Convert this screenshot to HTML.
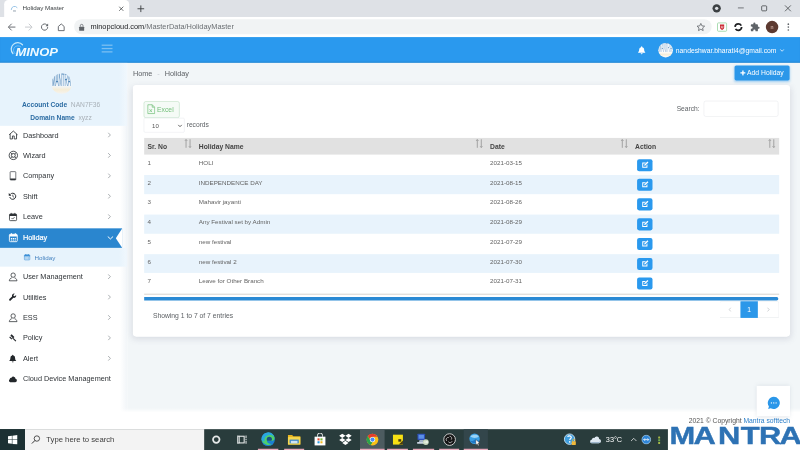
<!DOCTYPE html>
<html lang="en">
<head>
<meta charset="utf-8">
<title>Holiday Master</title>
<style>
*{box-sizing:border-box;margin:0;padding:0}
html,body{width:800px;height:450px;overflow:hidden;background:#fff}
body{font-family:"Liberation Sans",sans-serif;color:#333}
#S{position:absolute;left:0;top:0;width:1920px;height:1080px;transform:scale(0.4166667);transform-origin:0 0;overflow:hidden;background:#fff;filter:blur(.7px)}
.a{position:absolute}
/* chrome */
#tabs{left:0;top:0;width:1920px;height:41px;background:#dee1e6}
#tab{left:10px;top:0px;width:300px;height:41px;background:#fff;border-radius:10px 10px 0 0}
#tab span{position:absolute;left:44px;top:11px;font-size:15px;color:#3c4043}
#addr{left:0;top:41px;width:1920px;height:48px;background:#fff}
#pill{left:178px;top:46px;width:1530px;height:36px;border-radius:18px;background:#f1f3f4}
#url{left:217px;top:54px;font-size:17.75px;color:#202124;white-space:nowrap}
#url i{font-style:normal;color:#6b6f73}
/* app header */
#hdr{left:0;top:89px;width:1920px;height:62px;background:#2a99ee;box-shadow:inset 0 -5px 4px -2px rgba(20,70,120,.22)}
/* sidebar */
#side{left:0;top:151px;width:306px;height:879px;background:linear-gradient(90deg,#fff 0,#fff 288px,#f1f5f8 306px)}
#prof{left:0;top:151px;width:306px;height:151px;background:linear-gradient(90deg,#e7f3fc 0,#e7f3fc 285px,#f1f8fd 306px)}
.mi{position:absolute;left:0;width:293px;height:49px;font-size:17.5px;color:#2f3337;white-space:nowrap}
.mi b{position:absolute;left:55px;top:14px;font-weight:normal}
.mi .ch{position:absolute;left:258px;top:17px;width:9px;height:14px}
.mi svg.ic{position:absolute;left:19px;top:11px;width:26px;height:26px}
#act{background:#2a86cf;color:#fff}
#act b{top:12px}
#act svg.ic{top:9px}
#act b{font-weight:normal;-webkit-text-stroke:.45px #fff}
#sub{left:0;top:595px;width:306px;height:45px;background:linear-gradient(90deg,#e7f3fc 0,#e7f3fc 285px,#f1f8fd 306px);font-size:15px;color:#4583c0}
/* content */
#main{left:306px;top:151px;width:1614px;height:838px;background:#f2f6f8}
#card{left:319px;top:204px;width:1577px;height:604px;background:#fff;border-radius:8px;box-shadow:0 5px 16px rgba(110,112,140,.2)}
#foot{left:0;top:989px;width:1920px;height:41px;background:#fff}
table{border-collapse:collapse}
#tbl{left:346px;top:331px;width:1524px;font-size:15px;color:#636363}
#tbl th{height:40px;white-space:nowrap;text-align:left;font-weight:bold;color:#444;font-size:16.25px;padding-left:8px;padding-top:3px;position:relative}
#tbl td{height:47.4px;padding-left:8px;padding-bottom:9px}
.eb{display:inline-block;width:37px;height:29px;margin-left:5px;border-radius:5px;background:#2a99ee;vertical-align:middle;position:relative;top:6px}
/* taskbar */
#tb{left:0;top:1030px;width:1920px;height:50px;background:#293c3c}
.so{position:absolute;right:9px;top:2px;width:18px;height:23px}
</style>
</head>
<body>
<div id="S">
<!-- browser chrome -->
<div id="tabs" class="a"></div>
<div id="tab" class="a"><span>Holiday Master</span>
<svg class="a" style="left:14px;top:11px;width:22px;height:20px" viewBox="0 0 22 20"><path d="M3 12a8 8 0 0 1 14-5" fill="none" stroke="#8fbfe6" stroke-width="2.2" stroke-linecap="round"/><text x="7" y="17" font-size="8" font-weight="bold" fill="#9aa7b3" font-family="Liberation Sans, sans-serif">m</text></svg>
<svg class="a" style="left:274px;top:14px;width:14px;height:14px" viewBox="0 0 14 14"><path d="M2 2l10 10M12 2L2 12" stroke="#3c4043" stroke-width="1.8" fill="none"/></svg>
</div>
<svg class="a" style="left:328px;top:11px;width:20px;height:20px" viewBox="0 0 20 20"><path d="M10 2v16M2 10h16" stroke="#3c4043" stroke-width="2.2" fill="none"/></svg>
<!-- window controls -->
<svg class="a" style="left:1708px;top:8px;width:24px;height:24px" viewBox="0 0 24 24"><circle cx="12" cy="12" r="10" fill="#3c4043"/><circle cx="12" cy="12" r="4" fill="#dee1e6"/></svg>
<svg class="a" style="left:1766px;top:8px;width:24px;height:24px" viewBox="0 0 24 24"><path d="M5 11h14" stroke="#3c4043" stroke-width="1.6"/></svg>
<svg class="a" style="left:1822px;top:8px;width:24px;height:24px" viewBox="0 0 24 24"><rect x="6" y="6" width="12" height="12" rx="2" fill="none" stroke="#3c4043" stroke-width="1.8"/></svg>
<svg class="a" style="left:1879px;top:8px;width:24px;height:24px" viewBox="0 0 24 24"><path d="M5 5l14 14M19 5L5 19" stroke="#3c4043" stroke-width="1.8" fill="none"/></svg>
<div id="addr" class="a"></div>
<div id="pill" class="a"></div>
<!-- nav icons -->
<svg class="a" style="left:16px;top:53px;width:24px;height:24px" viewBox="0 0 24 24"><path d="M21 12H5M12 4l-8 8 8 8" stroke="#5f6368" stroke-width="2.2" fill="none"/></svg>
<svg class="a" style="left:57px;top:53px;width:24px;height:24px" viewBox="0 0 24 24"><path d="M3 12h16M12 4l8 8-8 8" stroke="#c4c7ca" stroke-width="2.2" fill="none"/></svg>
<svg class="a" style="left:95px;top:53px;width:24px;height:24px" viewBox="0 0 24 24"><path d="M19.5 12a7.5 7.5 0 1 1-2.2-5.3" stroke="#5f6368" stroke-width="2.3" fill="none"/><path d="M20.5 3.5v6.3h-6.3z" fill="#5f6368"/></svg>
<svg class="a" style="left:135px;top:53px;width:24px;height:24px" viewBox="0 0 24 24"><path d="M5 20.5V10.5l7-6 7 6v10z" stroke="#5f6368" stroke-width="2.2" fill="none" stroke-linejoin="round"/></svg>
<svg class="a" style="left:188px;top:56px;width:16px;height:20px" viewBox="0 0 16 20"><rect x="2" y="8" width="12" height="10" rx="1.5" fill="#5f6368"/><path d="M4.8 8V5.6a3.2 3.2 0 0 1 6.4 0V8" stroke="#5f6368" stroke-width="1.8" fill="none"/></svg>
<div id="url" class="a">minopcloud.com<i>/MasterData/HolidayMaster</i></div>
<!-- toolbar right -->
<svg class="a" style="left:1670px;top:53px;width:24px;height:24px" viewBox="0 0 24 24"><path d="M12 3.2l2.7 5.9 6.4.7-4.8 4.3 1.3 6.3-5.6-3.2-5.6 3.2 1.3-6.3-4.8-4.300 6.4-.7z" stroke="#5f6368" stroke-width="1.9" fill="none" stroke-linejoin="round"/></svg>
<svg class="a" style="left:1720px;top:52px;width:26px;height:26px" viewBox="0 0 26 26"><rect x="2" y="3" width="22" height="20" rx="2" fill="#fff" stroke="#9ad6a4" stroke-width="2"/><path d="M8 7h10v7c0 3-2.500 5-5 6-2.500-1-5-3-5-6z" fill="#c9252c"/><path d="M11 10v3.500a2 2 0 0 0 4 0V10" stroke="#fff" stroke-width="1.600" fill="none"/></svg>
<svg class="a" style="left:1759px;top:52px;width:26px;height:26px" viewBox="0 0 26 26"><circle cx="13" cy="13" r="8" fill="none" stroke="#202124" stroke-width="4.200" stroke-dasharray="20 5.130"/></svg>
<svg class="a" style="left:1800px;top:53px;width:24px;height:24px" viewBox="0 0 24 24"><path d="M20.500 11H19V7a2 2 0 0 0-2-2h-4V3.500a2.500 2.500 0 0 0-5 0V5H4a2 2 0 0 0-2 2v3.800h1.500a2.700 2.700 0 0 1 0 5.400H2V20a2 2 0 0 0 2 2h3.800v-1.500a2.700 2.700 0 0 1 5.400 0V22H17a2 2 0 0 0 2-2v-4h1.500a2.500 2.500 0 0 0 0-5z" fill="#5f6368"/></svg>
<div class="a" style="left:1838px;top:50px;width:30px;height:30px;border-radius:50%;background:#5d3a31;color:#e8c9bd;font-size:13px;text-align:center;line-height:30px">n</div>
<svg class="a" style="left:1880px;top:53px;width:24px;height:24px" viewBox="0 0 24 24"><circle cx="12" cy="5" r="2" fill="#5f6368"/><circle cx="12" cy="12" r="2" fill="#5f6368"/><circle cx="12" cy="19" r="2" fill="#5f6368"/></svg>

<!-- app header -->
<div id="hdr" class="a"></div>
<svg class="a" style="left:20px;top:96px;width:130px;height:46px" viewBox="0 0 130 46"><g transform="translate(3,2.500)"><path d="M8 30A15 15 0 0 1 31 9" fill="none" stroke="#c4e8fb" stroke-width="3" stroke-linecap="round"/><path d="M13 30A10 10 0 0 1 27 14" fill="none" stroke="#9fd2f6" stroke-width="1.500" stroke-linecap="round"/></g><text x="17" y="38" font-family="Liberation Sans, sans-serif" font-weight="bold" font-style="italic" font-size="24.500" fill="#f1fbff" textLength="102" lengthAdjust="spacingAndGlyphs">MINOP</text></svg>
<div class="a" style="left:244px;top:107px;width:26px;height:3px;background:#7cc0f2"></div>
<div class="a" style="left:244px;top:115px;width:26px;height:3px;background:#7cc0f2"></div>
<div class="a" style="left:244px;top:123px;width:26px;height:3px;background:#7cc0f2"></div>
<svg class="a" style="left:1529px;top:108px;width:22px;height:24px" viewBox="0 0 22 22"><path d="M11 2a1.500 1.500 0 0 1 1.500 1.500v.6A6 6 0 0 1 17 10c0 4 1.200 5.200 2.500 6.500v1.200h-17v-1.200C3.800 15.200 5 14 5 10a6 6 0 0 1 4.500-5.900v-.6A1.500 1.500 0 0 1 11 2zM8.700 18.800h4.600a2.300 2.300 0 0 1-4.600 0z" fill="#fff"/></svg>
<div class="a" style="left:1580px;top:103px;width:35px;height:35px;border-radius:50%;background:linear-gradient(#f4f9fd 0%,#fff 60%,#f6eeda 80%,#fff 100%);overflow:hidden"><svg width="35" height="35" viewBox="0 0 50 50"><g transform="translate(0,31) scale(1,4.200)"><text x="1" y="0" font-family="Liberation Sans, sans-serif" font-size="10" fill="#7fa6cc" textLength="46" lengthAdjust="spacingAndGlyphs">MANTRA</text></g></svg></div>
<div class="a" style="left:1622px;top:111px;font-size:16.250px;color:#fff;white-space:nowrap">nandeshwar.bharati4@gmail.com</div>
<svg class="a" style="left:1871px;top:117px;width:12px;height:8px" viewBox="0 0 12 8"><path d="M1.500 1.500l4.500 4.500 4.500-4.500" stroke="#fff" stroke-width="1.800" fill="none"/></svg>

<!-- sidebar -->
<div id="side" class="a"></div>
<div id="prof" class="a"></div>
<div class="a" style="left:123px;top:176px;width:50px;height:50px;border-radius:50%;overflow:hidden;background:linear-gradient(#eaf4fc 0%,#f1f7fc 58%,#f5edd8 78%,#f6f0e4 90%,#eef4f8 100%)"><svg width="50" height="50" viewBox="0 0 50 50"><g transform="translate(0,31) scale(1,4.200)"><text x="1" y="0" font-family="Liberation Sans, sans-serif" font-size="10" fill="#4f86b8" textLength="46" lengthAdjust="spacingAndGlyphs">MANTRA</text></g></svg></div>
<div class="a" style="left:0;top:242px;width:293px;text-align:center;font-size:16px;white-space:nowrap;color:#a9b1b8"><span style="font-weight:bold;color:#2c6ca3">Account Code</span>&nbsp; NAN7F36</div>
<div class="a" style="left:0;top:273px;width:293px;text-align:center;font-size:16px;white-space:nowrap;color:#a9b1b8"><span style="font-weight:bold;color:#2c6ca3">Domain Name</span>&nbsp; xyzz</div>
<div class="mi" style="top:300px"><svg class="ic" viewBox="0 0 22 22"><path d="M2.500 10.500L11 3l8.500 7.500M4.500 9v10h4.700v-6h3.600v6h4.700V9" fill="none" stroke="#2f3337" stroke-width="1.700" stroke-linejoin="round"/></svg><b>Dashboard</b><svg class="ch" viewBox="0 0 9 14"><path d="M1.500 1.500l5.500 5.500-5.500 5.500" stroke="#8a8f94" stroke-width="1.700" fill="none"/></svg></div>
<div class="mi" style="top:349px"><svg class="ic" viewBox="0 0 22 22"><circle cx="11" cy="11" r="8.500" fill="none" stroke="#2f3337" stroke-width="1.700"/><circle cx="11" cy="11" r="4" fill="none" stroke="#2f3337" stroke-width="1.700"/><path d="M5 5l3.500 3.500M17 5l-3.500 3.500M5 17l3.500-3.500M17 17l-3.500-3.500" stroke="#2f3337" stroke-width="1.700"/></svg><b>Wizard</b><svg class="ch" viewBox="0 0 9 14"><path d="M1.500 1.500l5.500 5.500-5.500 5.500" stroke="#8a8f94" stroke-width="1.700" fill="none"/></svg></div>
<div class="mi" style="top:398px"><svg class="ic" viewBox="0 0 22 22"><rect x="4.500" y="2.500" width="11.500" height="17" rx="1.300" fill="none" stroke="#3a3f44" stroke-width="1.400"/><path d="M4.500 16.500h11.500v2a1 1 0 0 1-1 1h-9.500a1 1 0 0 1-1-1z" fill="#2f3337"/></svg><b>Company</b><svg class="ch" viewBox="0 0 9 14"><path d="M1.500 1.500l5.500 5.500-5.500 5.500" stroke="#8a8f94" stroke-width="1.700" fill="none"/></svg></div>
<div class="mi" style="top:447px"><svg class="ic" viewBox="0 0 22 22"><g transform="translate(0.500,2) scale(.82)"><path d="M5.500 6.200A7.500 7.500 0 1 1 4 13" fill="none" stroke="#23272b" stroke-width="2.400"/><path d="M1.500 3v6.500h6.500z" fill="#23272b"/><path d="M11.500 7v4.500l3 2" fill="none" stroke="#23272b" stroke-width="1.800"/></g></svg><b>Shift</b><svg class="ch" viewBox="0 0 9 14"><path d="M1.500 1.500l5.500 5.500-5.500 5.500" stroke="#8a8f94" stroke-width="1.700" fill="none"/></svg></div>
<div class="mi" style="top:496px"><svg class="ic" viewBox="0 0 22 22"><g transform="translate(0.500,1.500) scale(.9)"><rect x="3" y="4.500" width="16" height="15" rx="2" fill="none" stroke="#2f3337" stroke-width="1.800"/><path d="M3 6.500a2 2 0 0 1 2-2h12a2 2 0 0 1 2 2V9H3z" fill="#2f3337"/><path d="M7 2v4M15 2v4" stroke="#2f3337" stroke-width="1.800"/><path d="M7.500 13.500l2.500 2.500 4.500-4.500" fill="none" stroke="#2f3337" stroke-width="1.700"/></g></svg><b>Leave</b><svg class="ch" viewBox="0 0 9 14"><path d="M1.500 1.500l5.500 5.500-5.500 5.500" stroke="#8a8f94" stroke-width="1.700" fill="none"/></svg></div>
<div class="mi" id="act" style="top:548px;height:47px"><svg class="ic" viewBox="0 0 22 22"><rect x="3" y="4.500" width="16" height="15" rx="2" fill="none" stroke="#fff" stroke-width="1.800"/><path d="M3 6.500a2 2 0 0 1 2-2h12a2 2 0 0 1 2 2V9H3z" fill="#fff"/><path d="M7 2v4M15 2v4" stroke="#fff" stroke-width="1.800"/><path d="M6 12h2.500v2H6zM9.800 12h2.500v2H9.800zM13.600 12h2.500v2h-2.500zM6 15.300h2.500v2H6zM9.800 15.300h2.500v2H9.800zM13.600 15.300h2.500v2h-2.500z" fill="#fff"/></svg><b>Holiday</b><svg class="ch" style="left:257px;top:18px;width:16px;height:10px" viewBox="0 0 16 10"><path d="M1.500 1.500l6.500 6 6.500-6" stroke="#fff" stroke-width="2.300" fill="none"/></svg><svg class="a" style="left:277px;top:0;width:16px;height:47px" viewBox="0 0 16 47"><path d="M16.500 0v47L1 23.500z" fill="#fff"/></svg></div>
<div class="mi" style="top:640px"><svg class="ic" viewBox="0 0 22 22"><g transform="translate(.5,1) scale(.92)"><circle cx="11" cy="7.500" r="4.800" fill="none" stroke="#2f3337" stroke-width="1.700"/><path d="M2.500 20c.5-4 3-6 5.500-6.500M19.500 20c-.5-4-3-6-5.500-6.500M2.500 20h17" fill="none" stroke="#2f3337" stroke-width="1.700"/></g></svg><b>User Management</b><svg class="ch" viewBox="0 0 9 14"><path d="M1.500 1.500l5.500 5.500-5.500 5.500" stroke="#8a8f94" stroke-width="1.700" fill="none"/></svg></div>
<div class="mi" style="top:689px"><svg class="ic" viewBox="0 0 22 22"><g transform="translate(1,2.500) scale(.8)"><path d="M19.500 5.500l-3.200 3.200-2.800-.7-.7-2.800L16 2a5.500 5.500 0 0 0-6.800 7L2.500 15.800a2.300 2.300 0 0 0 3.300 3.300L12.500 12.400A5.500 5.500 0 0 0 19.500 5.500z" fill="#23272b"/></g></svg><b>Utilities</b><svg class="ch" viewBox="0 0 9 14"><path d="M1.500 1.500l5.500 5.500-5.500 5.500" stroke="#8a8f94" stroke-width="1.700" fill="none"/></svg></div>
<div class="mi" style="top:738px"><svg class="ic" viewBox="0 0 22 22"><g transform="translate(.5,1) scale(.92)"><circle cx="11" cy="7.500" r="4.800" fill="none" stroke="#2f3337" stroke-width="1.700"/><path d="M2.500 20c.5-4 3-6 5.500-6.500M19.500 20c-.5-4-3-6-5.500-6.500M2.500 20h17" fill="none" stroke="#2f3337" stroke-width="1.700"/></g></svg><b>ESS</b><svg class="ch" viewBox="0 0 9 14"><path d="M1.500 1.500l5.500 5.500-5.500 5.500" stroke="#8a8f94" stroke-width="1.700" fill="none"/></svg></div>
<div class="mi" style="top:787px"><svg class="ic" viewBox="0 0 22 22"><g transform="translate(1,2.500) scale(.8)"><path d="M8.200 2.500l7 7-3.300 3.300-7-7zM11.500 10.500l8.500 8.500-2 2-8.500-8.500zM2 10.200l2.200-2.200 5.500 5.500-2.200 2.200z" fill="#23272b" transform="translate(0,-1)"/></g></svg><b>Policy</b><svg class="ch" viewBox="0 0 9 14"><path d="M1.500 1.500l5.500 5.500-5.500 5.500" stroke="#8a8f94" stroke-width="1.700" fill="none"/></svg></div>
<div class="mi" style="top:836px"><svg class="ic" viewBox="0 0 22 22"><g transform="translate(1,2.200) scale(.8)"><path d="M11 2a1.500 1.500 0 0 1 1.500 1.500v.6A6 6 0 0 1 17 10c0 4 1.200 5.200 2.500 6.500v1.200h-17v-1.200C3.800 15.200 5 14 5 10a6 6 0 0 1 4.500-5.900v-.6A1.500 1.500 0 0 1 11 2zM8.700 18.800h4.600a2.300 2.300 0 0 1-4.600 0z" fill="#23272b"/></g></svg><b>Alert</b><svg class="ch" viewBox="0 0 9 14"><path d="M1.500 1.500l5.500 5.500-5.500 5.500" stroke="#8a8f94" stroke-width="1.700" fill="none"/></svg></div>
<div class="mi" style="top:885px"><svg class="ic" viewBox="0 0 22 22"><g transform="translate(.5,2.200) scale(.85)"><path d="M17.500 10.200A5 5 0 0 0 8 8a3.600 3.600 0 0 0-4.300 3.500A3.800 3.800 0 0 0 5 18.500h12a4.200 4.200 0 0 0 .5-8.300z" fill="#23272b"/></g></svg><b>Cloud Device Management</b></div>
<div id="sub" class="a"><svg class="a" style="left:56px;top:13px;width:18px;height:18px" viewBox="0 0 22 22"><rect x="3" y="4.500" width="16" height="15" rx="2" fill="none" stroke="#3b8fd6" stroke-width="1.800"/><path d="M3 6.500a2 2 0 0 1 2-2h12a2 2 0 0 1 2 2V9H3z" fill="#3b8fd6"/><path d="M7 2v4M15 2v4" stroke="#3b8fd6" stroke-width="1.800"/><path d="M6 12h2.500v2H6zM9.800 12h2.500v2H9.800zM13.600 12h2.500v2h-2.500zM6 15.300h2.500v2H6zM9.800 15.300h2.500v2H9.800zM13.600 15.300h2.500v2h-2.500z" fill="#3b8fd6"/></svg><span class="a" style="left:83px;top:14px">Holiday</span></div>

<!-- content -->
<div id="main" class="a"></div>
<div class="a" style="left:319px;top:167px;font-size:17.500px;color:#5e6266;white-space:nowrap">Home <span style="color:#c5cad0;margin:0 7px 0 7px">-</span> Holiday</div>
<div class="a" style="left:1763px;top:157px;width:132px;height:36px;border-radius:4px;background:#2b97e9;box-shadow:0 2px 6px rgba(43,151,233,.4);color:#fff;font-size:16.250px;line-height:35px;white-space:nowrap"><svg class="a" style="left:13px;top:11px;width:14px;height:14px" viewBox="0 0 14 14"><path d="M7 1v12M1 7h12" stroke="#fff" stroke-width="3.200"/></svg><span class="a" style="left:30px;top:0">Add Holiday</span></div>
<div id="card" class="a"></div>
<div class="a" style="left:345px;top:243px;width:86px;height:40px;border:1.500px solid #a6d3ad;border-radius:5px;background:#f5fbf6;color:#74c07b;font-size:16.250px;line-height:36px;white-space:nowrap"><svg class="a" style="left:7px;top:5px;width:20px;height:26px" viewBox="0 0 17 21"><path d="M1.500 1.500h9l5 5v13h-14zM10.500 1.500v5h5" fill="none" stroke="#74c07b" stroke-width="1.500"/><path d="M5 10.500l5 6M10 10.500l-5 6" stroke="#74c07b" stroke-width="1.500"/></svg><span class="a" style="left:31px;top:0">Excel</span></div>
<div class="a" style="left:345px;top:283px;width:98px;height:35px;border:1.500px solid #e1e4e8;border-radius:3px;background:#fff;font-size:14.500px;color:#555;line-height:34px"><span class="a" style="left:19px;top:0">10</span><svg class="a" style="left:80px;top:14px;width:12px;height:8px" viewBox="0 0 12 8"><path d="M1.500 1.500l4.500 4.500 4.500-4.500" stroke="#333" stroke-width="1.800" fill="none"/></svg></div>
<div class="a" style="left:448px;top:291px;font-size:16px;color:#5e6266">records</div>
<div class="a" style="left:1624px;top:253px;font-size:16px;color:#5e6266">Search:</div>
<div class="a" style="left:1689px;top:242px;width:179px;height:38px;border:1.500px solid #dfe3e7;border-radius:5px;background:#fff"></div>
<div class="a" style="left:346px;top:331px;width:1524px;height:40px;background:#e1e1e1"></div>
<div class="a" style="left:346px;top:420.4px;width:1524px;height:45.4px;background:#e8f3fc"></div>
<div class="a" style="left:346px;top:515.2px;width:1524px;height:45.4px;background:#e8f3fc"></div>
<div class="a" style="left:346px;top:610.0px;width:1524px;height:45.4px;background:#e8f3fc"></div>
<table id="tbl" class="a"><colgroup><col style="width:123px"><col style="width:699px"><col style="width:348px"><col style="width:354px"></colgroup>
<tr><th>Sr. No<svg class="so" viewBox="0 0 14 18"><path d="M3.500 17V1.500M1.300 4L3.500 1.500 5.700 4M11 1v15.500M8.800 14L11 16.500l2.200-2.500" stroke="#9c9c9c" stroke-width="1.700" fill="none"/></svg></th><th>Holiday Name<svg class="so" viewBox="0 0 14 18"><path d="M3.500 17V1.500M1.300 4L3.500 1.500 5.700 4M11 1v15.500M8.800 14L11 16.500l2.200-2.500" stroke="#9c9c9c" stroke-width="1.700" fill="none"/></svg></th><th>Date<svg class="so" viewBox="0 0 14 18"><path d="M3.500 17V1.500M1.300 4L3.500 1.500 5.700 4M11 1v15.500M8.800 14L11 16.500l2.200-2.500" stroke="#9c9c9c" stroke-width="1.700" fill="none"/></svg></th><th>Action<svg class="so" viewBox="0 0 14 18"><path d="M3.500 17V1.500M1.300 4L3.500 1.500 5.700 4M11 1v15.500M8.800 14L11 16.500l2.200-2.500" stroke="#9c9c9c" stroke-width="1.700" fill="none"/></svg></th></tr>
<tr><td>1</td><td>HOLI</td><td>2021-03-15</td><td><span class="eb"><svg viewBox="0 0 16 16" width="19" height="19" style="position:absolute;left:10px;top:4px"><path d="M2 3.500h7.500l-2 2H4v6.500h6.500V9.500l2-2V14H2z" fill="#fff"/><path d="M12.500 1.500l2 2-6 6-2.600.6.600-2.600z" fill="#fff"/></svg></span></td></tr>
<tr><td>2</td><td>INDEPENDENCE DAY</td><td>2021-08-15</td><td><span class="eb"><svg viewBox="0 0 16 16" width="19" height="19" style="position:absolute;left:10px;top:4px"><path d="M2 3.500h7.500l-2 2H4v6.500h6.500V9.500l2-2V14H2z" fill="#fff"/><path d="M12.500 1.500l2 2-6 6-2.600.6.600-2.600z" fill="#fff"/></svg></span></td></tr>
<tr><td>3</td><td>Mahavir jayanti</td><td>2021-08-26</td><td><span class="eb"><svg viewBox="0 0 16 16" width="19" height="19" style="position:absolute;left:10px;top:4px"><path d="M2 3.500h7.500l-2 2H4v6.500h6.500V9.500l2-2V14H2z" fill="#fff"/><path d="M12.500 1.500l2 2-6 6-2.600.6.600-2.600z" fill="#fff"/></svg></span></td></tr>
<tr><td>4</td><td>Any Festival set by Admin</td><td>2021-08-29</td><td><span class="eb"><svg viewBox="0 0 16 16" width="19" height="19" style="position:absolute;left:10px;top:4px"><path d="M2 3.500h7.500l-2 2H4v6.500h6.500V9.500l2-2V14H2z" fill="#fff"/><path d="M12.500 1.500l2 2-6 6-2.600.6.600-2.600z" fill="#fff"/></svg></span></td></tr>
<tr><td>5</td><td>new festival</td><td>2021-07-29</td><td><span class="eb"><svg viewBox="0 0 16 16" width="19" height="19" style="position:absolute;left:10px;top:4px"><path d="M2 3.500h7.500l-2 2H4v6.500h6.500V9.500l2-2V14H2z" fill="#fff"/><path d="M12.500 1.500l2 2-6 6-2.600.6.600-2.600z" fill="#fff"/></svg></span></td></tr>
<tr><td>6</td><td>new festival 2</td><td>2021-07-30</td><td><span class="eb"><svg viewBox="0 0 16 16" width="19" height="19" style="position:absolute;left:10px;top:4px"><path d="M2 3.500h7.500l-2 2H4v6.500h6.500V9.500l2-2V14H2z" fill="#fff"/><path d="M12.500 1.500l2 2-6 6-2.600.6.600-2.600z" fill="#fff"/></svg></span></td></tr>
<tr><td>7</td><td>Leave for Other Branch</td><td>2021-07-31</td><td><span class="eb"><svg viewBox="0 0 16 16" width="19" height="19" style="position:absolute;left:10px;top:4px"><path d="M2 3.500h7.500l-2 2H4v6.500h6.500V9.500l2-2V14H2z" fill="#fff"/><path d="M12.500 1.500l2 2-6 6-2.600.6.600-2.600z" fill="#fff"/></svg></span></td></tr>
</table>
<div class="a" style="left:346px;top:705px;width:1524px;height:2px;background:#cfcac4"></div>
<div class="a" style="left:346px;top:712.5px;width:1522px;height:8px;border-radius:0 4px 4px 0;background:#2b8ad4"></div>
<div class="a" style="left:367px;top:748px;font-size:16.250px;color:#5e6266;white-space:nowrap">Showing 1 to 7 of 7 entries</div>
<div class="a" style="left:1727px;top:723px;width:50px;height:40px;border:1.500px solid #e0e4e8;border-right:0;border-radius:4px 0 0 4px;background:#fff"><svg class="a" style="left:20px;top:13px;width:8px;height:12px" viewBox="0 0 8 12"><path d="M6 1.500L2 6l4 4.500" stroke="#b5b9be" stroke-width="1.500" fill="none"/></svg></div>
<div class="a" style="left:1777px;top:723px;width:42px;height:40px;background:#2b97e9;color:#fff;font-size:16px;text-align:center;line-height:39px">1</div>
<div class="a" style="left:1819px;top:723px;width:51px;height:40px;border:1.500px solid #e0e4e8;border-left:0;border-radius:0 4px 4px 0;background:#fff"><svg class="a" style="left:21px;top:13px;width:8px;height:12px" viewBox="0 0 8 12"><path d="M2 1.500L6 6l-4 4.500" stroke="#b5b9be" stroke-width="1.500" fill="none"/></svg></div>
<div id="foot" class="a"></div>
<div class="a" style="left:288px;top:979px;width:1632px;height:11px;background:linear-gradient(180deg,rgba(255,255,255,0),#fff)"></div>
<div class="a" style="left:1653px;top:1000px;font-size:16.250px;color:#555;white-space:nowrap">2021 © Copyright <span style="color:#2b7fc9">Mantra softtech</span></div>
<div class="a" style="left:1816px;top:926px;width:80px;height:73px;background:#fff;box-shadow:0 1px 10px rgba(120,140,160,.25)"><svg class="a" style="left:23px;top:23px;width:36px;height:36px" viewBox="0 0 32 32"><path d="M16 3a13 13 0 1 1-6.500 24.300L4 29l1.700-5.500A13 13 0 0 1 16 3z" fill="#2b97e9"/><circle cx="11" cy="16" r="1.400" fill="#fff"/><circle cx="16" cy="16" r="1.400" fill="#fff"/><circle cx="21" cy="16" r="1.400" fill="#fff"/></svg></div>

<!-- taskbar -->
<div id="tb" class="a"></div>
<div class="a" style="left:0;top:1030px;width:60px;height:50px;background:#1c3033"></div>
<svg class="a" style="left:19px;top:1044px;width:23px;height:23px" viewBox="0 0 23 23"><path d="M0 3.200L9.500 1.900v9H0zM10.800 1.700L23 0v10.900H10.800zM0 12.200h9.500v9L0 19.900zM10.800 12.200H23V23l-12.200-1.700z" fill="#fff"/></svg>
<div class="a" style="left:60px;top:1030px;width:430px;height:50px;background:#f3f3f3;border-top:1px solid #e3e3e3"></div>
<svg class="a" style="left:74px;top:1043px;width:24px;height:24px" viewBox="0 0 24 24"><circle cx="14.500" cy="9.500" r="6.500" fill="none" stroke="#222" stroke-width="1.800"/><path d="M10 14L2.500 21.500" stroke="#222" stroke-width="2.200"/></svg>
<div class="a" style="left:111px;top:1044px;font-size:18.500px;color:#3d3d3d;white-space:nowrap">Type here to search</div>
<div class="a" style="left:864px;top:1030px;width:59px;height:50px;background:#4d5c60"></div>
<div class="a" style="left:1113px;top:1030px;width:58px;height:50px;background:#33464b"></div>
<svg class="a" style="left:507px;top:1043px;width:24px;height:24px" viewBox="0 0 24 24"><circle cx="12" cy="12" r="7.800" fill="none" stroke="#e6e9e9" stroke-width="4.200"/></svg>
<svg class="a" style="left:568px;top:1043px;width:26px;height:24px" viewBox="0 0 26 24"><rect x="6" y="4" width="12" height="16" fill="none" stroke="#e6e9e9" stroke-width="2.600"/><path d="M2.500 2v20M22.500 2v7M22.500 15v7M22.500 10.800v2.400M2.500 4h4M2.500 20h4" stroke="#e6e9e9" stroke-width="2.400"/></svg>
<svg class="a" style="left:625px;top:1036px;width:37px;height:37px" viewBox="0 0 32 32"><circle cx="16" cy="16" r="14" fill="#1b7fd1"/><path d="M3 19A13.500 13.500 0 0 1 29.500 13c0 4-3 6-7 6h-9c0 4 5 8 11 6A14 14 0 0 1 3 19z" fill="#4fd06a"/><path d="M2.500 17A13.500 13.500 0 0 1 29.500 13C28 8 22 5.500 16 7.500S7 15 9 21c-3-1-5.500-2-6.500-4z" fill="#2aa7e0"/><path d="M13 16a5.500 5.500 0 0 1 11 0c0 2-1.500 3-4 3h-6.500z" fill="#1a4f86"/></svg>
<svg class="a" style="left:690px;top:1041px;width:32px;height:28px" viewBox="0 0 32 28"><path d="M1 3h10l3 3h17v20H1z" fill="#e8b520"/><rect x="1" y="8" width="30" height="18" fill="#f7d84f"/><rect x="5" y="14" width="22" height="9" fill="#3f86c9"/><rect x="8" y="17" width="16" height="6" fill="#cfe3f3"/></svg>
<svg class="a" style="left:753px;top:1039px;width:30px;height:32px" viewBox="0 0 30 32"><path d="M9 9V6a6 6 0 0 1 12 0v3" fill="none" stroke="#fff" stroke-width="2.200"/><rect x="2" y="9" width="26" height="21" fill="#fff"/><rect x="9" y="13" width="5" height="5" fill="#e8482e"/><rect x="16" y="13" width="5" height="5" fill="#7ab83a"/><rect x="9" y="20" width="5" height="5" fill="#2b9be0"/><rect x="16" y="20" width="5" height="5" fill="#f2b921"/></svg>
<svg class="a" style="left:813px;top:1040px;width:32px;height:30px" viewBox="0 0 32 30"><path d="M8.500 1L16 6 8.500 11 1 6zM23.500 1L31 6l-7.500 5L16 6zM1 16l7.500-5 7.500 5-7.500 5zM23.500 11l7.500 5-7.500 5-7.500-5zM8.500 23l7.500-5 7.500 5-7.500 5z" fill="#fff"/></svg>
<svg class="a" style="left:878px;top:1039px;width:32px;height:32px" viewBox="0 0 32 32"><circle cx="16" cy="16" r="14" fill="#fbc116"/><path d="M16 2a14 14 0 0 1 12.100 7H16a7 7 0 0 0-6.600 4.700L4.600 7.300A14 14 0 0 1 16 2z" fill="#e33b2e"/><path d="M4.600 7.300l6 10.200A7 7 0 0 0 16 23l-4.500 6.200A14 14 0 0 1 4.600 7.300z" fill="#2ba24c"/><circle cx="16" cy="16" r="6.300" fill="#fff"/><circle cx="16" cy="16" r="5" fill="#4a8af4"/></svg>
<svg class="a" style="left:942px;top:1042px;width:26px;height:26px" viewBox="0 0 26 26"><rect x="1" y="1" width="24" height="24" fill="#f7e014"/><path d="M15 25l10-10v10z" fill="#4a3b12"/><rect x="14" y="12" width="7" height="6" fill="#4a3b12"/></svg>
<svg class="a" style="left:998px;top:1038px;width:34px;height:34px" viewBox="0 0 34 34"><rect x="4" y="3" width="18" height="15" rx="1" fill="#2d4fb8"/><rect x="6.500" y="5.500" width="13" height="9.500" fill="#5b8fe6"/><path d="M9 18h9l2 6H7z" fill="#9fb0c8"/><rect x="3" y="23" width="22" height="4" rx="1" fill="#c9d3e0"/><circle cx="24" cy="23" r="7" fill="#c9d8bf"/><path d="M20 23h8M25 20l3 3-3 3" stroke="#fff" stroke-width="1.800" fill="none"/></svg>
<svg class="a" style="left:1063px;top:1039px;width:32px;height:32px" viewBox="0 0 32 32"><circle cx="16" cy="16" r="14" fill="#151515" stroke="#dcdcdc" stroke-width="2.200"/><path d="M16 8a5 5 0 0 1 4 8M9 19a5 5 0 0 1 5-8M22 20a5 5 0 0 1-9 1" stroke="#d0d0d0" stroke-width="2" fill="none"/></svg>
<svg class="a" style="left:1123px;top:1038px;width:34px;height:34px" viewBox="0 0 34 34"><circle cx="16" cy="15" r="12.500" fill="#3aa0e6"/><path d="M6 9c5-4 14-5 20 0-2 5-16 6-20 0z" fill="#9ad4f7"/><path d="M5 19c4 3 10 1 12-3 3 1 6 4 10 3-3 8-18 9-22 0z" fill="#1f78c6"/><path d="M19 17l9.500 8.500-4.200.4 2.400 4.800-2.200 1-2.300-4.800-3.200 2.800z" fill="#fff" stroke="#222" stroke-width=".800"/></svg>
<div class="a" style="left:619px;top:1077px;width:49px;height:3px;background:#e9a9ba"></div>
<div class="a" style="left:682px;top:1077px;width:48px;height:3px;background:#e9a9ba"></div>
<div class="a" style="left:864px;top:1077px;width:59px;height:3px;background:#e9a9ba"></div>
<div class="a" style="left:929px;top:1077px;width:50px;height:3px;background:#e9a9ba"></div>
<div class="a" style="left:991px;top:1077px;width:51px;height:3px;background:#e9a9ba"></div>
<div class="a" style="left:1054px;top:1077px;width:48px;height:3px;background:#e9a9ba"></div>
<div class="a" style="left:1113px;top:1077px;width:58px;height:3px;background:#e9a9ba"></div>
<svg class="a" style="left:1352px;top:1039px;width:32px;height:32px" viewBox="0 0 32 32"><circle cx="15" cy="15" r="12.500" fill="#3f9ede"/><circle cx="15" cy="15" r="12.500" fill="none" stroke="#d5ecfa" stroke-width="2"/><path d="M10 9c2-3 8-3 9 1 .6 3-3 4-3.500 7" stroke="#fff" stroke-width="3" fill="none"/><circle cx="15.300" cy="21.500" r="1.900" fill="#fff"/><rect x="20" y="20" width="10" height="9" rx="1" fill="#f0b93a"/><path d="M22 20v-2a3 3 0 0 1 6 0v2" stroke="#f0b93a" stroke-width="1.800" fill="none"/></svg>
<svg class="a" style="left:1415px;top:1045px;width:29px;height:21px" viewBox="0 0 34 24"><path d="M27 9.500A7 7 0 0 0 13.500 7 5.500 5.500 0 0 0 6 12a5 5 0 0 0 1 10h19a6.300 6.300 0 0 0 1-12.500z" fill="#dfe9f2"/><path d="M8 18h18a4 4 0 0 0 3.800-2.500A6.300 6.300 0 0 1 26 22H7a5 5 0 0 1-4.600-3z" fill="#9db6cc"/></svg>
<div class="a" style="left:1454px;top:1045px;font-size:17.500px;color:#fff;white-space:nowrap">33°C</div>
<svg class="a" style="left:1513px;top:1050px;width:16px;height:10px" viewBox="0 0 16 10"><path d="M1.500 8.500L8 2l6.500 6.500" stroke="#fff" stroke-width="1.700" fill="none"/></svg>
<svg class="a" style="left:1539px;top:1043px;width:24px;height:24px" viewBox="0 0 24 24"><circle cx="12" cy="12" r="10.500" fill="#2f86d8"/><circle cx="12" cy="12" r="10.500" fill="none" stroke="#bfe0f7" stroke-width="1.500"/><path d="M6 12h12M9 9l-3 3 3 3M15 9l3 3-3 3" stroke="#fff" stroke-width="1.800" fill="none"/></svg>
<svg class="a" style="left:1578px;top:1046px;width:8px;height:21px" viewBox="0 0 10 26" opacity=".8"><rect x="2" y="2" width="6" height="6" rx="1" fill="#c7d94a"/><rect x="2" y="10" width="6" height="6" rx="1" fill="#7ec850"/><rect x="2" y="18" width="6" height="6" rx="1" fill="#c7d94a"/></svg>
<div class="a" style="left:1603px;top:1020px;width:317px;height:60px;background:#fff"></div>
<svg class="a" style="left:1603px;top:1020px;width:317px;height:60px" viewBox="0 0 317 60"><text transform="scale(1.3,1)" x="2.800 47.100 92.500 134.400 168.200 205.800" y="44.500" font-family="Liberation Sans, sans-serif" font-weight="bold" font-size="57" fill="#2d72b4" stroke="#2d72b4" stroke-width="1">MANTRA</text></svg>
</div>
</body>
</html>
